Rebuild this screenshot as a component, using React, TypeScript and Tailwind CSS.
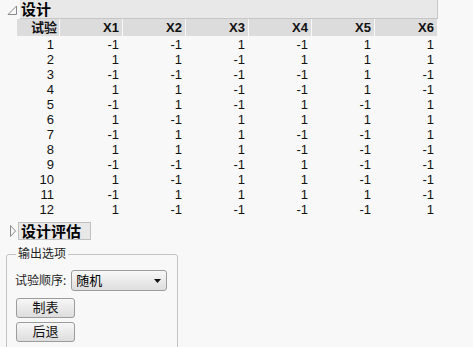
const ROWS: number[][] = [
  [-1, -1, 1, -1, 1, 1],
  [1, 1, -1, 1, 1, 1],
  [-1, -1, -1, -1, 1, -1],
  [1, 1, -1, -1, 1, -1],
  [-1, 1, -1, 1, -1, 1],
  [1, -1, 1, 1, 1, 1],
  [-1, 1, 1, -1, -1, 1],
  [1, 1, 1, -1, -1, -1],
  [-1, -1, -1, 1, -1, -1],
  [1, -1, 1, 1, -1, -1],
  [-1, 1, 1, 1, 1, -1],
  [1, -1, -1, -1, -1, 1],
];

const COLS = ["X1", "X2", "X3", "X4", "X5", "X6"];

const FONT = "font-['Noto_Sans','Noto_Sans_CJK_SC',sans-serif]";
const NUM_FONT = "font-['Liberation_Sans','Noto_Sans_CJK_SC',sans-serif]";

function OpenTriangle() {
  return (
    <svg width="11" height="10" viewBox="0 0 11 10" className="shrink-0">
      <path d="M9.5 1 L9.5 9.5 L1 9.5 Z" fill="none" stroke="#8a8a8a" strokeWidth="1" />
    </svg>
  );
}

function ClosedTriangle() {
  return (
    <svg width="6" height="12" viewBox="0 0 6 12" className="shrink-0">
      <path d="M0.5 0.5 L5.5 6 L0.5 11.5 Z" fill="none" stroke="#8a8a8a" strokeWidth="1" />
    </svg>
  );
}

function DesignTable() {
  return (
    <div className={`ml-[17px] w-[420px] text-[13px] leading-[15px] text-[#111] ${NUM_FONT}`}>
      <div className="grid h-[17px] grid-cols-[42px_repeat(6,62px)] gap-x-px">
        <div className={`flex items-center justify-end bg-[#dcdcdc] pr-[2px] font-bold ${FONT}`}>试验</div>
        {COLS.map((c) => (
          <div key={c} className="flex items-center justify-end bg-[#dcdcdc] pr-[3px] font-bold">
            {c}
          </div>
        ))}
      </div>
      <div className="pt-px">
        {ROWS.map((r, i) => (
          <div key={i} className="grid h-[15px] grid-cols-[42px_repeat(6,62px)] gap-x-px">
            <div className="pr-[5px] text-right">{i + 1}</div>
            {r.map((v, j) => (
              <div key={j} className="pr-[3px] text-right">
                {v}
              </div>
            ))}
          </div>
        ))}
      </div>
    </div>
  );
}

function GrayButton({ label }: { label: string }) {
  return (
    <button className="flex h-[20px] w-[59px] items-center justify-center rounded-[3px] border border-[#9c9c9c] bg-gradient-to-b from-[#f7f7f7] to-[#dddddd] text-[13px] text-[#111]">
      {label}
    </button>
  );
}

export default function App() {
  return (
    <div className={`h-[347px] w-[473px] overflow-hidden bg-[#f8f8f8] ${FONT}`}>
      <div className="flex h-[19px] items-start">
        <div className="ml-[7px] mt-[5px] w-[13px]">
          <OpenTriangle />
        </div>
        <div className="h-[19px] w-[418px] border-b border-r border-[#c6c6c6] bg-[#e8e8e8] pl-[1px] text-[15px] font-bold leading-[18px] text-black">
          设计
        </div>
      </div>

      <DesignTable />

      <div className="mt-[5px] flex h-[18px] items-center">
        <div className="ml-[10px] w-[8px]">
          <ClosedTriangle />
        </div>
        <div className="flex h-[18px] w-[73px] items-center border border-[#c0c0c0] bg-[#e8e8e8] pl-[2px] text-[15px] font-bold text-black">
          设计评估
        </div>
      </div>

      <fieldset className="ml-[6px] mt-[7px] h-[120px] w-[172px] rounded-[3px] border border-[#c4c4c4] px-[8px]">
        <legend className="ml-[1px] px-[2px] text-[12px] leading-[14px] text-[#222]">输出选项</legend>
        <div className="mt-[9px] flex items-center gap-[5px]">
          <span className="text-[12px] text-[#222]">试验顺序:</span>
          <div className="flex h-[21px] w-[96px] items-center justify-between rounded-[3px] border border-[#9c9c9c] bg-gradient-to-b from-[#f8f8f8] to-[#dedede] pl-[4px] pr-[5px] text-[13px] text-black">
            <span>随机</span>
            <svg width="7" height="4" viewBox="0 0 7 4">
              <path d="M0 0 L7 0 L3.5 4 Z" fill="#111" />
            </svg>
          </div>
        </div>
        <div className="mt-[7px] flex flex-col gap-[4px] pl-px">
          <GrayButton label="制表" />
          <GrayButton label="后退" />
        </div>
      </fieldset>
    </div>
  );
}
